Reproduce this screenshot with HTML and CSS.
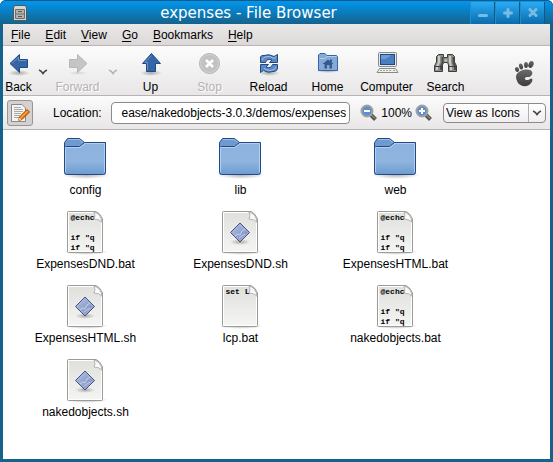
FILE: index.html
```html
<!DOCTYPE html>
<html lang="en">
<head>
<meta charset="utf-8">
<title>expenses - File Browser</title>
<meta name="viewport" content="width=device-width, initial-scale=1">
<link rel="stylesheet" href="styles.css">
</head>
<body>
<svg class="defs" width="0" height="0" aria-hidden="true">
  <defs>
    <linearGradient id="g-folder" x1="0" y1="0" x2="0" y2="1"><stop offset="0" stop-color="#8db2dd"/><stop offset=".6" stop-color="#8fb4de"/><stop offset="1" stop-color="#6d9bd0"/></linearGradient>
    <linearGradient id="g-page" x1="0" y1="0" x2="0" y2="1"><stop offset="0" stop-color="#dfe0dc"/><stop offset="1" stop-color="#f5f5f4"/></linearGradient>
    <linearGradient id="g-gem" x1="0" y1="0" x2="1" y2="1"><stop offset="0" stop-color="#b4c3e2"/><stop offset="1" stop-color="#7385bd"/></linearGradient>
    <linearGradient id="g-foot" x1="0" y1="0" x2="0" y2="1"><stop offset="0" stop-color="#6a6a6a"/><stop offset="1" stop-color="#3e3e3e"/></linearGradient>
    <radialGradient id="g-shade"><stop offset="0" stop-color="#000" stop-opacity=".3"/><stop offset="1" stop-color="#000" stop-opacity="0"/></radialGradient>
  </defs>
  <symbol id="folder" viewBox="0 0 48 44">
    <ellipse cx="24" cy="38" rx="24" ry="4" fill="url(#g-shade)"/>
    <path d="M2.500 13V5.500L5.500 1.500H17.500L22.500 5.500H42.500Q43.500 5.500 43.500 6.500V13Z" fill="#6f9ad0" stroke="#204a87"/>
    <path d="M2.500 10.500L4.500 9.500H17.500L22.500 5.500H43.500V35.500Q43.500 37.500 41.500 37.500H4.500Q2.500 37.500 2.500 35.500Z" fill="url(#g-folder)" stroke="#204a87"/>
    <path d="M3.500 35V10.500H18L23 6.500H42.500V35" fill="none" stroke="#b5cfec"/>
    <path d="M6 2.500H17L21 5.500" fill="none" stroke="#9cbde4"/>
  </symbol>
  <symbol id="page" viewBox="0 0 48 44">
    <ellipse cx="24" cy="41" rx="22" ry="3" fill="url(#g-shade)"/>
    <path d="M6.500 .5H34Q38 2 40.500 8V40.500Q40.500 41.500 39.500 41.500H6.500Q5.500 41.500 5.500 40.500V1.500Q5.500 .5 6.500 .5Z" fill="url(#g-page)" stroke="#9a9b97"/>
    <path d="M6.500 1.500H32M6.500 1.500V40.500H39.500V12" fill="none" stroke="#fff"/>
    <path d="M32 1Q34 5 32 8Q37 8 40 11Q39 3 32 1Z" fill="#fbfbfb" stroke="#b4b5b1"/>
  </symbol>
  <symbol id="script" viewBox="0 0 48 44">
    <use href="#page"/>
    <ellipse cx="23" cy="31" rx="10" ry="3" fill="url(#g-shade)"/>
    <path d="M23 12L32.500 21.500L23 31L13.500 21.500Z" fill="url(#g-gem)" stroke="#46527c"/>
    <path d="M15 21.500L23 13.500L31 21.500L23 29.500Z" fill="none" stroke="#a9b8dc"/>
    <path d="M18 25L21 23L23 24L25 20L28 18M22 27L25 25L28 23" fill="none" stroke="#c6d1ea"/>
  </symbol>
  <symbol id="chevron" viewBox="0 0 10 6"><path d="M1 1Q3.500 2 5 4.500Q6.500 2 9 1" fill="none" stroke="currentColor" stroke-width="1.500"/></symbol>
</svg>

<div class="window">
  <header class="titlebar">
    <svg class="cabinet" width="14" height="16" viewBox="0 0 14 16"><path d="M1.500 .5H12.500L13.500 3V15.500H.5V3Z" fill="#d6d7d2" stroke="#555753"/><path d="M2.500 4.500H11.500V13.500H2.500ZM2.500 9H11.500" fill="#b2b4ae" stroke="#6d6f6a"/><path d="M5 6.500H9M5 11.500H9" stroke="#555753"/></svg>
    <h1>expenses - File Browser</h1>
    <div class="controls">
      <button aria-label="Minimize"><svg width="10" height="10" viewBox="0 0 10 10"><path d="M1.500 7.500H8.500"/></svg></button>
      <button aria-label="Maximize"><svg width="10" height="10" viewBox="0 0 10 10"><path d="M1.500 5H8.500M5 1.500V8.500"/></svg></button>
      <button aria-label="Close"><svg width="10" height="10" viewBox="0 0 10 10"><path d="M2 1.500L8 7.500M8 1.500L2 7.500"/></svg></button>
    </div>
  </header>

  <nav class="menubar">
    <button><u>F</u>ile</button><button><u>E</u>dit</button><button><u>V</u>iew</button><button><u>G</u>o</button><button><u>B</u>ookmarks</button><button><u>H</u>elp</button>
  </nav>

  <div class="toolbar">
    <button class="tool nav-back"><svg width="24" height="26" viewBox="0 0 24 26"><ellipse cx="12" cy="22" rx="11" ry="3" fill="url(#g-shade)"/><path d="M3 12.500L12.500 3.500V8.500H20.500V16.500H12.500V21.500Z" fill="#3465a4" stroke="#204a87"/><path d="M5 12.500L11.500 6V9.500H19.500" fill="none" stroke="#6a93c8"/></svg>Back</button>
    <button class="drop" aria-label="Back history"><svg width="10" height="6"><use href="#chevron"/></svg></button>
    <button class="tool nav-forward" disabled><svg width="24" height="26" viewBox="0 0 24 26"><ellipse cx="12" cy="22" rx="10" ry="2" fill="url(#g-shade)" opacity=".4"/><path d="M21 12.500L11.500 3.500V8.500H3.500V16.500H11.500V21.500Z" fill="#c6c5c5" stroke="#b8b7b7"/></svg>Forward</button>
    <button class="drop" aria-label="Forward history" disabled><svg width="10" height="6"><use href="#chevron"/></svg></button>
    <button class="tool"><svg width="24" height="26" viewBox="0 0 24 26"><ellipse cx="12" cy="22" rx="11" ry="3" fill="url(#g-shade)"/><path d="M12.500 2.500L21.500 12.500H16.500V20.500H7.500V12.500H3.500Z" fill="#3465a4" stroke="#204a87"/><path d="M12.500 4.500L6 11.500H8.500V19" fill="none" stroke="#6a93c8"/></svg>Up</button>
    <button class="tool" disabled><svg width="24" height="26" viewBox="0 0 24 26"><circle cx="11.500" cy="12.500" r="10" fill="#c3c1c1" stroke="#b3b1b1"/><circle cx="11.500" cy="12.500" r="9" fill="none" stroke="#d3d1d1"/><path d="M8 9L15 16M15 9L8 16" stroke="#fff" stroke-width="2.500"/></svg>Stop</button>
    <button class="tool"><svg width="24" height="26" viewBox="0 0 24 26"><ellipse cx="12" cy="22" rx="11" ry="3" fill="url(#g-shade)"/><path d="M3.500 11.500V6Q4 4 7 4.500Q12 2.500 17 5.500L20.500 3.500V11.500H12.500L15 9Q10 7 8.500 11.500Z" fill="#5c87c0" stroke="#204a87"/><path d="M20.500 13.500V18Q19 21 16 20.500Q11 22.500 6.500 19.500L3.500 21.500V13.500H11.500L9 16Q14 18 15.500 13.500Z" fill="#5c87c0" stroke="#204a87"/><path d="M5 9Q6 5.500 11 5.500Q14 5.500 17 7.500L19.500 5.500M19 16Q18 19.500 13 19.500Q10 19.500 7 17.500" fill="none" stroke="#a5c2e6"/></svg>Reload</button>
    <button class="tool"><svg width="24" height="26" viewBox="0 0 24 26"><ellipse cx="12" cy="20" rx="12" ry="2" fill="url(#g-shade)"/><path d="M2.500 19.500V4L4 2.500H9L11 4.500H20.500L21.500 6V19.500Z" fill="#85aad8" stroke="#3465a4"/><path d="M3.500 7.500H8.500L11 5.500H20.500" fill="none" stroke="#b3cdec"/><path d="M6.500 13L12 8.500L17.500 13H16V17.500H13.500V14H11V17.500H8.500V13Z" fill="#34598f"/><path d="M15 8.500V11" stroke="#34598f" stroke-width="2"/></svg>Home</button>
    <button class="tool"><svg width="24" height="26" viewBox="0 0 24 26"><rect x="3.500" y="1.500" width="18" height="14" rx="1" fill="#e8e9e6" stroke="#888a85"/><rect x="5.500" y="3.500" width="14" height="10" fill="#4b7dc0" stroke="#204a87"/><path d="M6 13V8Q12 9 16 4H6Z" fill="#6f9bd4"/><path d="M4.500 17.500H20.500L23 21.500H2Z" fill="#eeeeec" stroke="#888a85"/><path d="M5 19.500H16M18 19.500H20" stroke="#a3a5a0" stroke-dasharray="2 1"/></svg>Computer</button>
    <button class="tool"><svg width="24" height="26" viewBox="0 0 24 26"><path d="M4.500 3.500H9.500V6.500H13.500V3.500H18.500L20.500 5.500V11L22.500 15V20.500H14.500V14L13.500 11.500H9.500L8.500 14V20.500H.500V15L2.500 11V5.500Z" fill="#8b8d87" stroke="#3a3e3b"/><path d="M5 5V11L3 16V19M16 5V11L17 16V19" fill="none" stroke="#c9ccc5" stroke-width="2"/><path d="M8.500 6V12L7 15V19M19.500 6V12L21 15V19" fill="none" stroke="#4a4d49" stroke-width="2"/><path d="M10.500 9.500H13" stroke="#c5c8c1" stroke-width="2"/><path d="M1 15.500H8M15 15.500H22" stroke="#3a3e3b"/></svg>Search</button>
    <svg class="foot" width="22" height="28" viewBox="0 0 22 28"><g fill="url(#g-foot)"><ellipse cx="3" cy="9.500" rx="2" ry="2.500" transform="rotate(-25 3 9.500)"/><ellipse cx="7" cy="6.500" rx="2" ry="3" transform="rotate(-10 7 6.500)"/><ellipse cx="12" cy="5" rx="2" ry="3"/><ellipse cx="17" cy="4.500" rx="2.500" ry="3.500" transform="rotate(25 17 4.500)"/><path d="M2 17C2 12 8 9.500 13 9.500C18 9.500 20 13 17 16C15 18 12 16 11 18C10 20 14 21 16 19C19 17 19 21 17 23C14 27.500 7 27 4 23C3 21 2 19 2 17Z"/></g></svg>
  </div>

  <div class="locationbar">
    <button class="toggle" aria-label="Edit location"><svg width="22" height="22" viewBox="0 0 22 22"><path d="M2.500 2.500H13L16.500 6V19.500H2.500Z" fill="#f4f4f2" stroke="#888a85"/><path d="M5 5.500H12M5 7.500H14M5 9.500H14M5 11.500H12M5 13.500H11M5 15.500H10" stroke="#a9aaa6"/><path d="M9.500 18.500L10.500 15L18 7.500L20.500 10L13 17.500Z" fill="#f57900" stroke="#a54a00"/><path d="M12 15.500L18.500 9" stroke="#fcc06a"/><path d="M9 19L10.500 15.500L12.500 17.500Z" fill="#e9d6a6"/></svg></button>
    <label for="location">Location:</label>
    <input id="location" type="text" value="ease/nakedobjects-3.0.3/demos/expenses">
    <div class="zoom">
      <button aria-label="Zoom out"><svg width="18" height="18" viewBox="0 0 18 18"><path d="M10.500 10.500L15.500 15.500" stroke="#555753" stroke-width="4"/><path d="M11 10.500L15 14.500" stroke="#a7a9a4"/><circle cx="7" cy="7" r="5.500" fill="#5b8fd2" stroke="#a0a29e" stroke-width="2"/><path d="M4 7H10" stroke="#fff" stroke-width="2"/></svg></button>
      <span>100%</span>
      <button aria-label="Zoom in"><svg width="18" height="18" viewBox="0 0 18 18"><path d="M10.500 10.500L15.500 15.500" stroke="#555753" stroke-width="4"/><path d="M11 10.500L15 14.500" stroke="#a7a9a4"/><circle cx="7" cy="7" r="5.500" fill="#5b8fd2" stroke="#a0a29e" stroke-width="2"/><path d="M4 7H10M7 4V10" stroke="#fff" stroke-width="2"/></svg></button>
    </div>
    <div class="picker"><select aria-label="View mode"><option>View as Icons</option></select><span class="picker-arrow"><svg width="10" height="6"><use href="#chevron"/></svg></span></div>
  </div>

  <main class="files">
    <a class="file" href="#"><span class="icon"><svg width="48" height="44"><use href="#folder"/></svg></span><span>config</span></a>
    <a class="file" href="#"><span class="icon"><svg width="48" height="44"><use href="#folder"/></svg></span><span>lib</span></a>
    <a class="file" href="#"><span class="icon"><svg width="48" height="44"><use href="#folder"/></svg></span><span>web</span></a>
    <a class="file" href="#"><span class="icon"><svg width="48" height="44"><use href="#page"/></svg><span class="thumb">@echc

if "q
if "q</span></span><span>ExpensesDND.bat</span></a>
    <a class="file" href="#"><span class="icon"><svg width="48" height="44"><use href="#script"/></svg></span><span>ExpensesDND.sh</span></a>
    <a class="file" href="#"><span class="icon"><svg width="48" height="44"><use href="#page"/></svg><span class="thumb">@echc

if "q
if "q</span></span><span>ExpensesHTML.bat</span></a>
    <a class="file" href="#"><span class="icon"><svg width="48" height="44"><use href="#script"/></svg></span><span>ExpensesHTML.sh</span></a>
    <a class="file" href="#"><span class="icon"><svg width="48" height="44"><use href="#page"/></svg><span class="thumb">set L</span></span><span>lcp.bat</span></a>
    <a class="file" href="#"><span class="icon"><svg width="48" height="44"><use href="#page"/></svg><span class="thumb">@echc

if "q
if "q</span></span><span>nakedobjects.bat</span></a>
    <a class="file" href="#"><span class="icon"><svg width="48" height="44"><use href="#script"/></svg></span><span>nakedobjects.sh</span></a>
  </main>
</div>
</body>
</html>
```
FILE: styles.css
```css
* { box-sizing: border-box; }

body {
  margin: 0;
  background: #fff;
  color: #000;
  font: 12px/16px "Liberation Sans", Arial, sans-serif;
}

button, input, select { font: inherit; color: inherit; }

button {
  margin: 0;
  padding: 0;
  border: 0;
  background: none;
}

svg { display: block; flex: none; }

.defs { position: absolute; }

.window {
  display: flex;
  flex-direction: column;
  min-height: 100vh;
  padding: 0 3px 3px;
  background: #15628c;
  border-radius: 6px 6px 0 0;
}

.titlebar {
  display: flex;
  align-items: center;
  height: 24px;
  margin: 0 -3px;
  padding: 0 8px 0 13px;
  border-top: 1px solid #12587f;
  border-radius: 6px 6px 0 0;
  background: linear-gradient(#0096ee, #15628c);
}

.titlebar h1 {
  flex: 1;
  margin: 0;
  color: #fff;
  font: 15px/20px "DejaVu Sans", sans-serif;
  text-align: center;
}

.controls { display: flex; }

.controls button {
  display: flex;
  align-items: center;
  justify-content: center;
  width: 25px;
  height: 22px;
  border-right: 1px solid #12587f;
  border-left: 1px solid #1c8fd0;
  background: linear-gradient(#2aabf6, #0a6cab);
}

.controls path {
  fill: none;
  stroke: #78bce4;
  stroke-width: 3;
  stroke-linecap: round;
}

.menubar {
  display: flex;
  gap: 15px;
  height: 22px;
  padding: 0 8px;
  border-bottom: 1px solid #b9b5b5;
  background: linear-gradient(#eae8e8, #dcd8d8);
}

.menubar u { text-underline-offset: 2px; }

.toolbar, .locationbar {
  display: flex;
  border-bottom: 1px solid #b9b2b2;
  background: linear-gradient(#fcfcfc, #e8e6e6);
}

.toolbar { height: 50px; }

.tool {
  display: flex;
  flex-direction: column;
  align-items: center;
  gap: 2px;
  width: 59px;
  padding-top: 5px;
}

.nav-back { width: 31px; }
.nav-forward { width: 53px; }

.drop {
  display: flex;
  justify-content: center;
  width: 17px;
  padding-top: 23px;
  color: #444;
}

button:disabled {
  color: #b5b2b2;
  text-shadow: 1px 1px #fff;
}

.foot { margin: 14px 14px 0 auto; }

.locationbar {
  align-items: center;
  height: 34px;
  padding: 0 4px;
}

.toggle {
  display: flex;
  align-items: center;
  justify-content: center;
  width: 26px;
  height: 26px;
  border: 1px solid #9a9494;
  border-radius: 3px;
  background: #d5d1d1;
}

.locationbar label { margin: 0 9px 0 20px; }

#location {
  flex: 1;
  min-width: 0;
  height: 22px;
  padding: 0 3px;
  border: 1px solid #8f8888;
  border-radius: 4px;
  background: #fff;
  direction: rtl;
}

.zoom {
  display: flex;
  align-items: center;
  gap: 3px;
  margin: 0 10px;
}

.picker {
  display: flex;
  width: 103px;
  height: 20px;
  border: 1px solid #8f8888;
  border-radius: 4px;
  background: linear-gradient(#fff, #f0eeee);
}

.picker select {
  flex: 1;
  min-width: 0;
  padding: 0 2px;
  border: 0;
  appearance: none;
  background: none;
}

.picker-arrow {
  display: flex;
  align-items: center;
  justify-content: center;
  width: 17px;
  border-left: 1px solid #b5b0b0;
  color: #444;
}

.files {
  display: grid;
  flex: 1;
  grid-template-columns: repeat(auto-fill, 155px);
  align-content: start;
  gap: 13px 0;
  padding: 7px 5px;
  background: #fff;
}

.file {
  display: flex;
  flex-direction: column;
  align-items: center;
  gap: 1px;
  color: #000;
  text-decoration: none;
}

.icon { position: relative; }

.thumb {
  position: absolute;
  top: 2px;
  left: 9px;
  font: bold 8px/10px "Liberation Mono", monospace;
  white-space: pre;
}
```
